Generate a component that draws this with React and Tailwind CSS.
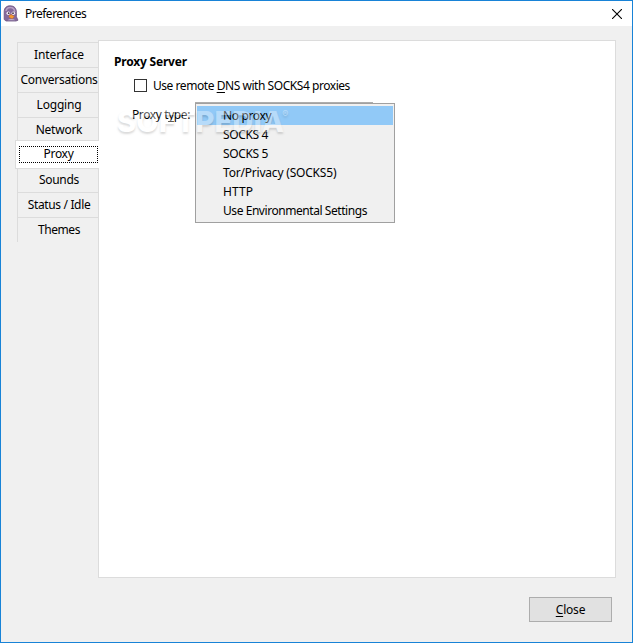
import React from 'react';

const TABS = [
  { name: 'Interface', text: 'tracking-[-0.1px]' },
  { name: 'Conversations', text: 'tracking-[-0.25px]' },
  { name: 'Logging', text: 'tracking-[-0.2px]' },
  { name: 'Network', text: 'tracking-[-0.25px]' },
  { name: 'Proxy', text: 'tracking-[-0.3px]' },
  { name: 'Sounds', text: 'tracking-[-0.3px]' },
  { name: 'Status / Idle', text: 'tracking-[-0.35px]' },
  { name: 'Themes', text: 'tracking-[-0.4px]' },
];

const PROXY_TYPES = [
  { name: 'No proxy', text: 'tracking-[-0.35px]' },
  { name: 'SOCKS 4', text: 'tracking-[-0.35px]' },
  { name: 'SOCKS 5', text: 'tracking-[-0.35px]' },
  { name: 'Tor/Privacy (SOCKS5)', text: 'tracking-[-0.2px]' },
  { name: 'HTTP', text: 'tracking-[0.05px]' },
  { name: 'Use Environmental Settings', text: 'tracking-[-0.44px]' },
];

const PidginIcon = () => (
  <svg className="h-[17px] w-[16px]" viewBox="0 0 16 17">
    <path d="M1.2 14.5V6.5C1.2 2.8 3.7.8 7.2.8c4.2 0 6.2 2.8 6.2 6.4v4.6l1.6 3.4-2 .8H3Z" fill="#84699a" stroke="#6b5280" strokeWidth=".8" />
    <path d="M3 6C3.4 3.6 5 2.4 7.2 2.4c2.8 0 4.4 1.8 4.6 4.6" fill="none" stroke="#b6a0c4" strokeWidth="1.5" />
    <circle cx="5.3" cy="8.2" r="1.8" fill="#f4eef5" />
    <circle cx="10.3" cy="8.2" r="1.8" fill="#f4eef5" />
    <circle cx="5.7" cy="8.2" r=".9" fill="#443347" />
    <circle cx="10" cy="8.2" r=".9" fill="#443347" />
    <path d="M6 10.5 8.2 9.6l3.2 1.9-2.2 2.3-3.2-1.5Z" fill="#f39a32" stroke="#c4642a" strokeWidth=".5" />
    <path d="M4.5 15.2c2-1.5 5.5-1.5 8 0Z" fill="#c3b2cc" />
  </svg>
);

const TitleBar = () => (
  <header className="flex h-[25px] items-center bg-white pr-[10px] pl-[2px]">
    <PidginIcon />
    <h1 className="ml-[6px] -mt-px tracking-[-0.5px]">Preferences</h1>
    <svg className="ml-auto h-[10px] w-[10px]" viewBox="0 0 10 10" aria-label="Close window">
      <path d="M0 0l10 10M10 0L0 10" stroke="#000" strokeWidth="1.1" />
    </svg>
  </header>
);

const Tab = ({ tab, selected }) => {
  if (selected) {
    return (
      <button className="relative z-10 -my-[2px] flex h-[29px] w-[84px] shrink-0 items-center border-y border-l border-[#dcdcdc] bg-white pb-px pl-[3px]">
        <span className={`flex h-[17px] w-[79px] items-center justify-center border border-dotted border-black pb-px ${tab.text}`}>
          {tab.name}
        </span>
      </button>
    );
  }
  return (
    <button
      className={`ml-[2px] flex h-[25px] shrink-0 items-center justify-center border-t border-l border-[#dcdcdc] pb-[2px] pl-[2px] whitespace-nowrap ${tab.text}`}
    >
      {tab.name}
    </button>
  );
};

const ProxyMenu = () => (
  <div className="absolute top-[102px] left-[194px] h-[120px] w-[200px] border border-[#a0a0a0] bg-[#f0f0f0] px-px py-[2px]">
    <ul>
      {PROXY_TYPES.map((type, index) => (
        <li
          key={type.name}
          className={`flex h-[19px] items-center pl-[26px] whitespace-nowrap ${type.text} ${index === 0 ? 'bg-[#91c9f7]' : ''}`}
        >
          {type.name}
        </li>
      ))}
    </ul>
  </div>
);

const Watermark = () => (
  <div className="pointer-events-none absolute top-[104px] left-[116px] flex h-[32px] items-center font-['Inter',sans-serif] text-[29px] font-extrabold tracking-[0.1px] text-white opacity-35 [text-shadow:0_2px_2px_rgba(0,0,0,0.4)]">
    SOFTPEDIA<span className="-ml-[2px] mb-[16px] text-[9px] font-normal">®</span>
  </div>
);

const App = () => {
  return (
    <main className="relative flex h-[643px] w-[633px] flex-col overflow-hidden border border-[#1883d7] bg-[#f0f0f0] font-['Noto_Sans',sans-serif] text-[12px] leading-[17px] text-black">
      <TitleBar />
      <div className="mt-[14px] flex h-[538px] pl-[14px]">
        <nav className="flex w-[83px] flex-col pt-[2px]">
          {TABS.map((tab) => (
            <Tab key={tab.name} tab={tab} selected={tab.name === 'Proxy'} />
          ))}
        </nav>
        <section className="w-[518px] border border-[#dcdcdc] bg-white pt-[12px] pl-[15px]">
          <h2 className="font-bold tracking-[-0.2px]">Proxy Server</h2>
          <label className="mt-[7px] ml-5 flex items-center tracking-[-0.45px]">
            <span className="mr-[6px] h-[13px] w-[13px] border border-[#333]" />
            <span>
              Use remote <u className="underline-offset-2">D</u>NS with SOCKS4 proxies
            </span>
          </label>
          <div className="mt-[8px] ml-[18px] flex">
            <span className="mt-[4px] w-[63px] tracking-[-0.4px] whitespace-nowrap">
              Proxy t<u className="underline-offset-2 [text-decoration-skip-ink:none]">y</u>pe:
            </span>
            <span className="h-[25px] w-[178px] border-t border-[#adadad]" />
          </div>
        </section>
      </div>
      <footer className="mt-[19px] flex justify-end pr-[20px]">
        <button className="h-[25px] w-[83px] border border-[#adadad] bg-[#e1e1e1] tracking-[-0.2px]">
          <u className="underline-offset-2">C</u>lose
        </button>
      </footer>
      <ProxyMenu />
      <Watermark />
    </main>
  );
};

export default App;
